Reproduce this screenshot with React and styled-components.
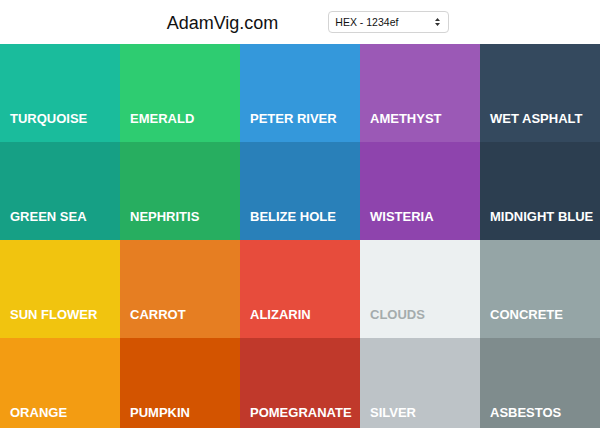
import React from 'react'
import styled, { createGlobalStyle } from 'styled-components'

const GlobalStyle = createGlobalStyle`
  html, body {
    margin: 0;
    padding: 0;
    background: #fff;
    font-family: "Liberation Sans", Arial, Helvetica, sans-serif;
  }
`

const COLORS = [
  { name: 'Turquoise', hex: '#1abc9c' },
  { name: 'Emerald', hex: '#2ecc71' },
  { name: 'Peter River', hex: '#3498db' },
  { name: 'Amethyst', hex: '#9b59b6' },
  { name: 'Wet Asphalt', hex: '#34495e' },
  { name: 'Green Sea', hex: '#16a085' },
  { name: 'Nephritis', hex: '#27ae60' },
  { name: 'Belize Hole', hex: '#2980b9' },
  { name: 'Wisteria', hex: '#8e44ad' },
  { name: 'Midnight Blue', hex: '#2c3e50' },
  { name: 'Sun Flower', hex: '#f1c40f' },
  { name: 'Carrot', hex: '#e67e22' },
  { name: 'Alizarin', hex: '#e74c3c' },
  { name: 'Clouds', hex: '#ecf0f1', dark: true },
  { name: 'Concrete', hex: '#95a5a6' },
  { name: 'Orange', hex: '#f39c12' },
  { name: 'Pumpkin', hex: '#d35400' },
  { name: 'Pomegranate', hex: '#c0392b' },
  { name: 'Silver', hex: '#bdc3c7' },
  { name: 'Asbestos', hex: '#7f8c8d' },
]

const Header = styled.header`
  height: 44px;
  display: flex;
  align-items: center;
  justify-content: center;
  gap: 50px;
  padding-left: 16px;
  box-sizing: border-box;
`

const Title = styled.h1`
  margin: 0;
  font-size: 18px;
  font-weight: 400;
  color: #111;
  line-height: 1;
  padding-top: 2px;
`

const SelectWrap = styled.div`
  position: relative;
  width: 121px;
  height: 22px;
`

const Select = styled.select`
  appearance: none;
  -webkit-appearance: none;
  width: 100%;
  height: 100%;
  margin: 0;
  padding: 0 20px 0 6px;
  border: 1px solid #d4d4d4;
  border-radius: 4px;
  background: #fff;
  font-family: "Liberation Sans", Arial, sans-serif;
  font-size: 10.5px;
  color: #111;
  box-sizing: border-box;
`

const Arrows = styled.svg`
  position: absolute;
  right: 9px;
  top: 7px;
  pointer-events: none;
`

const Grid = styled.main`
  display: grid;
  grid-template-columns: repeat(5, 120px);
  grid-auto-rows: 98px;
`

const Swatch = styled.div`
  background: ${(p) => p.$bg};
  display: flex;
  align-items: flex-end;
  padding: 0 0 15px 10px;
  box-sizing: border-box;
`

const Label = styled.span`
  font-size: 13px;
  font-weight: 700;
  text-transform: uppercase;
  color: ${(p) => (p.$dark ? '#a5acad' : '#fff')};
  white-space: nowrap;
  line-height: 16px;
`

export default function App() {
  return (
    <>
      <GlobalStyle />
      <Header>
        <Title>AdamVig.com</Title>
        <SelectWrap>
          <Select defaultValue="hex">
            <option value="hex">HEX - 1234ef</option>
            <option value="rgb">RGB - 18, 52, 239</option>
          </Select>
          <Arrows width="5" height="8" viewBox="0 0 5 8">
            <path d="M2.5 0 L5 3 L0 3 Z M2.5 8 L5 5 L0 5 Z" fill="#333" />
          </Arrows>
        </SelectWrap>
      </Header>
      <Grid>
        {COLORS.map((c) => (
          <Swatch key={c.name} $bg={c.hex}>
            <Label $dark={c.dark}>{c.name}</Label>
          </Swatch>
        ))}
      </Grid>
    </>
  )
}
